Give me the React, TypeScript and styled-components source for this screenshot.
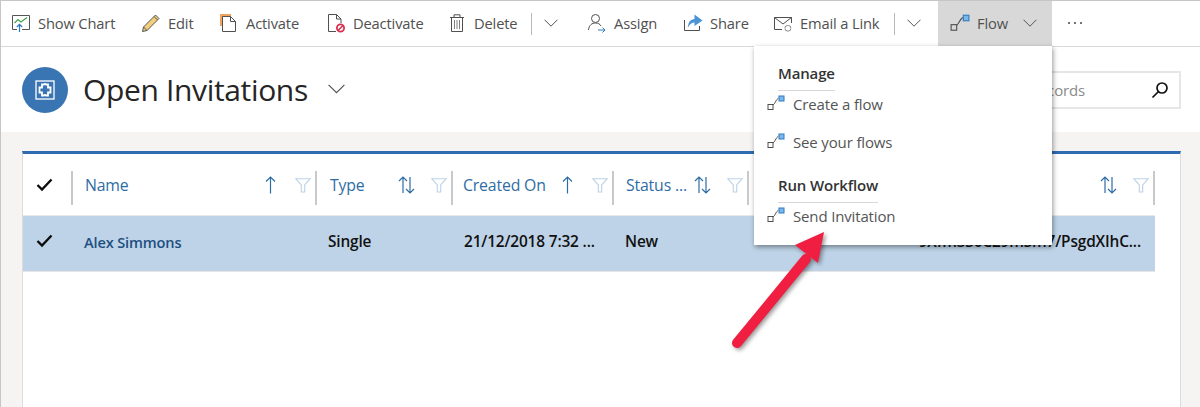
import { ReactNode } from "react";
import styled, { createGlobalStyle } from "styled-components";

const GlobalCSS = createGlobalStyle`
  html, body {
    margin: 0;
    padding: 0;
    background: #ffffff;
  }
  * {
    box-sizing: border-box;
  }
`;

const Page = styled.div`
  position: relative;
  display: flex;
  flex-direction: column;
  width: 1200px;
  height: 407px;
  overflow: hidden;
  background: #f5f4f2;
  border-top: 1px solid #c6c6c6;
  border-left: 1px solid #c6c6c6;
  font-family: "Open Sans", "Noto Sans", sans-serif;
`;

const Toolbar = styled.div`
  display: flex;
  align-items: stretch;
  height: 46px;
  flex: none;
  padding-left: 10px;
  background: #ffffff;
  border-bottom: 1px solid #d8d8d8;
`;

const ToolButton = styled.div<{ $w: number; $active?: boolean }>`
  display: flex;
  align-items: center;
  gap: 7px;
  width: ${({ $w }) => $w}px;
  flex: none;
  padding-bottom: 2px;
  color: #505050;
  font-size: 14.7px;
  letter-spacing: -0.15px;
  white-space: nowrap;
  background: ${({ $active }) => ($active ? "#d8d8d8" : "transparent")};
`;

const ToolIcon = styled.svg`
  width: 20px;
  height: 20px;
  flex: none;
`;

const ToolDivider = styled.div`
  width: 1px;
  height: 22px;
  align-self: center;
  flex: none;
  background: #b8b8b8;
`;

const ChevronSlot = styled.div<{ $w: number }>`
  display: flex;
  align-items: center;
  width: ${({ $w }) => $w}px;
  flex: none;
  padding-left: 12px;
`;

const FlowButton = styled(ToolButton)`
  padding-left: 12px;
  margin-bottom: -1px;
`;

const FlowChevron = styled.span`
  display: flex;
  margin-left: 8px;
`;

const Dots = styled.div`
  display: flex;
  align-items: center;
  gap: 4px;
  padding: 0 0 2px 16px;
`;

const Dot = styled.span`
  width: 2px;
  height: 2px;
  border-radius: 50%;
  background: #444444;
`;

const Header = styled.div`
  display: flex;
  align-items: center;
  justify-content: space-between;
  height: 85px;
  flex: none;
  padding: 0 19px 0 21px;
  background: #ffffff;
`;

const TitleGroup = styled.div`
  display: flex;
  align-items: center;
`;

const EntityBadge = styled.div`
  display: flex;
  align-items: center;
  justify-content: center;
  width: 46px;
  height: 46px;
  border-radius: 50%;
  background: #3a75b3;
`;

const Title = styled.h1`
  margin: 0 20px 0 15px;
  color: #252525;
  font-size: 30px;
  font-weight: 400;
  letter-spacing: -0.35px;
  line-height: 46px;
`;

const SearchBox = styled.div`
  display: flex;
  align-items: center;
  justify-content: space-between;
  width: 240px;
  height: 38px;
  padding: 0 10px 0 16px;
  color: #8b8b8b;
  font-size: 15px;
  letter-spacing: -0.15px;
  background: #ffffff;
  border: 2px solid #e6e6e6;
`;

const Content = styled.div`
  flex: 1;
  padding: 19px 19px 0 21px;
`;

const Card = styled.div`
  height: 100%;
  padding-right: 25px;
  background: #ffffff;
  border-top: 3px solid #2e6bb0;
  border-left: 1px solid #dcdcdc;
  border-right: 1px solid #dcdcdc;
`;

const gridColumns = "50px 244px 136px 161px 135px 1fr";

const HeaderRow = styled.div`
  display: grid;
  grid-template-columns: ${gridColumns};
  height: 62px;
  border-bottom: 1px solid #e8e8e8;
`;

const HeaderCell = styled.div<{ $pad?: number }>`
  display: flex;
  align-items: center;
  justify-content: flex-end;
  height: 34px;
  margin-top: 17px;
  padding: 0 4px 6px ${({ $pad = 12 }) => $pad}px;
  color: #2e6da4;
  font-size: 15.8px;
  letter-spacing: -0.15px;
  border-right: 2px solid #c9c9c9;
`;

const HeaderLabel = styled.span`
  flex: 1;
  white-space: nowrap;
`;

const SortSlot = styled.span`
  display: flex;
  justify-content: center;
  width: 18px;
  flex: none;
`;

const FilterSlot = styled.span`
  display: flex;
  justify-content: center;
  width: 16px;
  margin-left: 16px;
  flex: none;
`;

const CheckCell = styled.div`
  display: flex;
  align-items: center;
  height: 34px;
  margin-top: 17px;
  padding: 0 0 6px 13px;
  border-right: 2px solid #c9c9c9;
`;

const RowCheckCell = styled.div`
  display: flex;
  align-items: center;
  padding: 0 0 5px 13px;
`;

const DataRow = styled.div`
  display: grid;
  grid-template-columns: ${gridColumns};
  align-items: center;
  height: 56px;
  color: #111111;
  font-size: 15.4px;
  font-weight: 600;
  letter-spacing: -0.15px;
  background: #bed3e7;
  border-bottom: 1px solid #e6e6e6;
`;

const DataCell = styled.div<{ $link?: boolean; $end?: boolean }>`
  padding: 0 14px 4px 11px;
  white-space: nowrap;
  color: ${({ $link }) => ($link ? "#1d4f80" : "#111111")};
  font-size: ${({ $link }) => ($link ? "14.6px" : "inherit")};
  text-align: ${({ $end }) => ($end ? "right" : "left")};
`;

const Menu = styled.div`
  position: absolute;
  left: 753px;
  top: 45px;
  width: 298px;
  height: 199px;
  padding: 17px 0 0 13px;
  background: #ffffff;
  box-shadow: 1px 2px 5px rgba(0, 0, 0, 0.42);
`;

const MenuHeading = styled.div`
  display: table;
  margin-left: 11px;
  padding-bottom: 7px;
  color: #333333;
  font-size: 15px;
  font-weight: 600;
  letter-spacing: -0.15px;
  line-height: 20px;
  border-bottom: 1px solid #d8d8d8;
`;

const MenuGroup = styled.div`
  margin-bottom: 8px;
`;

const MenuItem = styled.div<{ $h: number }>`
  display: flex;
  align-items: flex-start;
  gap: 8px;
  height: ${({ $h }) => $h}px;
  padding-top: 3px;
  color: #555555;
  font-size: 15px;
  letter-spacing: -0.15px;
  line-height: 20px;
`;

const MenuIcon = styled.svg`
  width: 18px;
  height: 18px;
  flex: none;
`;

const Arrow = styled.svg`
  position: absolute;
  left: 725px;
  top: 228px;
  width: 100px;
  height: 130px;
  filter: drop-shadow(2px 2px 2px rgba(0, 0, 0, 0.4));
`;

const Chevron = ({ size = 14 }: { size?: number }) => (
  <svg width={size} height={size * 0.6} viewBox="0 0 14 8" fill="none" stroke="#555" strokeWidth="1">
    <path d="M0.5 0.5 L7 7 L13.5 0.5" />
  </svg>
);

const Check = () => (
  <svg width="17" height="14" viewBox="0 0 17 14" fill="none" stroke="#0d0d0d" strokeWidth="2.4">
    <path d="M1.5 7 L6 11.5 L15.5 1.5" />
  </svg>
);

const UpArrow = () => (
  <svg width="11" height="18" viewBox="0 0 11 18" fill="none" stroke="#2e6da4" strokeWidth="1.2">
    <path d="M5.5 17.5 V1 M1 5.5 L5.5 1 L10 5.5" />
  </svg>
);

const UpDownArrows = () => (
  <svg width="17" height="18" viewBox="0 0 17 18" fill="none" stroke="#2e6da4" strokeWidth="1.2">
    <path d="M5 17 V1 M1 5 L5 1 L9 5" />
    <path d="M12 1 V17 M8 13 L12 17 L16 13" />
  </svg>
);

const Funnel = () => (
  <svg width="16" height="15" viewBox="0 0 16 15" fill="none" stroke="#bcd2e6" strokeWidth="1.1">
    <path d="M0.7 0.7 H15.3 L9.7 7 V14 H6.3 V7 Z" />
  </svg>
);

const flowPaths = (
  <>
    <rect x="1" y="10.5" width="5" height="5" fill="none" stroke="#505050" />
    <path d="M6 11 C8 10 8.5 6 11.5 4" fill="none" stroke="#505050" />
    <rect x="12" y="2" width="5" height="5" fill="#7db7e8" stroke="#2f7cc4" />
  </>
);

const FlowIcon = () => <MenuIcon viewBox="0 0 18 18">{flowPaths}</MenuIcon>;

type ToolProps = {
  w: number;
  label: string;
  icon: ReactNode;
};

const Tool = ({ w, label, icon }: ToolProps) => (
  <ToolButton $w={w}>
    <ToolIcon viewBox="0 0 20 20">{icon}</ToolIcon>
    {label}
  </ToolButton>
);

const tools: ToolProps[] = [
  {
    w: 130,
    label: "Show Chart",
    icon: (
      <>
        <path d="M6 16.5 H1.5 V2.5 H18.5 V16.5 H11" fill="none" stroke="#555" />
        <path d="M3.5 10 L7 6.5 L10 9 L16 4.5" fill="none" stroke="#3fa34d" strokeWidth="1.2" />
        <path d="M8.5 19 V11.5 M5.8 14 L8.5 11.3 L11.2 14" fill="none" stroke="#2e78c2" strokeWidth="1.2" />
      </>
    ),
  },
  {
    w: 78,
    label: "Edit",
    icon: (
      <>
        <path d="M2.5 14 L14.5 2 L18 5.5 L6 17.5 L1.5 18.5 Z" fill="#f3cf7d" stroke="#555" />
        <path d="M2.5 14 L6 17.5" fill="none" stroke="#555" />
        <path d="M13 3.5 L16.5 7" fill="none" stroke="#555" />
      </>
    ),
  },
  {
    w: 107,
    label: "Activate",
    icon: (
      <>
        <path d="M1 13 V1 H12 V4 H4 V13 Z" fill="#f0a45c" />
        <path d="M3.5 3.5 H11.5 L16.5 8.5 V18.5 H3.5 Z M11.5 3.5 V8.5 H16.5" fill="#fff" stroke="#505050" />
      </>
    ),
  },
  {
    w: 121,
    label: "Deactivate",
    icon: (
      <>
        <path d="M10 18.5 H2.5 V1.5 H10.5 L15 6 V10 M10.5 1.5 V6 H15" fill="none" stroke="#505050" />
        <circle cx="14.5" cy="15" r="3.6" fill="#fff" stroke="#d9304f" strokeWidth="1.8" />
        <path d="M12 17.5 L17 12.5" stroke="#d9304f" strokeWidth="1.6" />
      </>
    ),
  },
  {
    w: 84,
    label: "Delete",
    icon: (
      <>
        <path d="M3 4.5 H17 M7 4.5 V1.8 H13 V4.5" fill="none" stroke="#505050" />
        <path d="M4.5 4.5 V18.5 H15.5 V4.5" fill="none" stroke="#505050" />
        <path d="M7.5 7 V16 M10 7 V16 M12.5 7 V16" fill="none" stroke="#808080" />
      </>
    ),
  },
];

const tools2: ToolProps[] = [
  {
    w: 96,
    label: "Assign",
    icon: (
      <>
        <circle cx="8.5" cy="5.5" r="4" fill="none" stroke="#505050" />
        <path d="M1.5 17 C2 12 5 10 8.5 10 C11 10 13 11 14 13" fill="none" stroke="#505050" />
        <path d="M11 17 H18 M15.5 14.5 L18 17 L15.5 19.5" fill="none" stroke="#2e78c2" />
      </>
    ),
  },
  {
    w: 90,
    label: "Share",
    icon: (
      <>
        <path d="M1.5 7 V17.5 H16.5 V13" fill="none" stroke="#505050" />
        <path d="M5 14.5 C5 8.5 8 6.5 11.5 6 V1.5 L19.5 7.5 L11.5 13 V9.5 C9 9.5 6.5 11 5 14.5 Z" fill="#4a94d6" />
      </>
    ),
  },
  {
    w: 121,
    label: "Email a Link",
    icon: (
      <>
        <path d="M9 16.5 H1.5 V4.5 H18.5 V10 M1.5 4.5 L10 11 L18.5 4.5" fill="none" stroke="#505050" />
        <path d="M12 15 A2.4 2.4 0 0 1 14.4 12.5 H15.5 A2.4 2.4 0 0 1 17.8 15" fill="none" stroke="#808080" />
        <path d="M12 15.5 A2.4 2.4 0 0 0 14.4 18 H15.5 A2.4 2.4 0 0 0 17.8 15.5" fill="none" stroke="#808080" />
      </>
    ),
  },
];

const columns: { label: string; sort: "up" | "both"; pad: number }[] = [
  { label: "Name", sort: "up", pad: 12 },
  { label: "Type", sort: "both", pad: 13 },
  { label: "Created On", sort: "up", pad: 10 },
  { label: "Status ...", sort: "both", pad: 12 },
];

const App = () => {
  return (
    <>
      <GlobalCSS />
      <Page>
        <Toolbar>
          {tools.map((t) => (
            <Tool key={t.label} {...t} />
          ))}
          <ToolDivider />
          <ChevronSlot $w={55}>
            <Chevron />
          </ChevronSlot>
          {tools2.map((t) => (
            <Tool key={t.label} {...t} />
          ))}
          <ToolDivider />
          <ChevronSlot $w={43}>
            <Chevron />
          </ChevronSlot>
          <FlowButton $w={114} $active>
            <ToolIcon viewBox="0 0 18 18">{flowPaths}</ToolIcon>
            Flow
            <FlowChevron>
              <Chevron />
            </FlowChevron>
          </FlowButton>
          <Dots>
            <Dot />
            <Dot />
            <Dot />
          </Dots>
        </Toolbar>

        <Header>
          <TitleGroup>
            <EntityBadge>
              <svg width="20" height="20" viewBox="0 0 20 20" fill="none" stroke="#fff">
                <rect x="1" y="1" width="18" height="18" strokeWidth="1.3" />
                <path
                  d="M4.5 7.5 H7 V4.5 H9 A1.2 1.2 0 0 1 11 4.5 H13 V7.5 H15.5 V12.5 H13 V15.5 H11 A1.2 1.2 0 0 0 9 15.5 H7 V12.5 H4.5 Z"
                  strokeWidth="1.8"
                />
              </svg>
            </EntityBadge>
            <Title>Open Invitations</Title>
            <Chevron size={17} />
          </TitleGroup>
          <SearchBox>
            Search for records
            <svg width="18" height="18" viewBox="0 0 18 18" fill="none" stroke="#111" strokeWidth="1.7">
              <circle cx="11" cy="7" r="5" />
              <path d="M7.5 10.5 L1.5 16.5" />
            </svg>
          </SearchBox>
        </Header>

        <Content>
          <Card>
            <HeaderRow>
              <CheckCell>
                <Check />
              </CheckCell>
              {columns.map((c) => (
                <HeaderCell key={c.label} $pad={c.pad}>
                  <HeaderLabel>{c.label}</HeaderLabel>
                  <SortSlot>{c.sort === "up" ? <UpArrow /> : <UpDownArrows />}</SortSlot>
                  <FilterSlot>
                    <Funnel />
                  </FilterSlot>
                </HeaderCell>
              ))}
              <HeaderCell>
                <SortSlot>
                  <UpDownArrows />
                </SortSlot>
                <FilterSlot>
                  <Funnel />
                </FilterSlot>
              </HeaderCell>
            </HeaderRow>
            <DataRow>
              <RowCheckCell>
                <Check />
              </RowCheckCell>
              <DataCell $link>Alex Simmons</DataCell>
              <DataCell>Single</DataCell>
              <DataCell>21/12/2018 7:32 ...</DataCell>
              <DataCell>New</DataCell>
              <DataCell $end>9Xfm3S0C29mSm7/PsgdXIhC...</DataCell>
            </DataRow>
          </Card>
        </Content>

        <Menu>
          <MenuGroup>
            <MenuHeading>Manage</MenuHeading>
            <MenuItem $h={38}>
              <FlowIcon />
              Create a flow
            </MenuItem>
            <MenuItem $h={38}>
              <FlowIcon />
              See your flows
            </MenuItem>
          </MenuGroup>
          <MenuGroup>
            <MenuHeading>Run Workflow</MenuHeading>
            <MenuItem $h={30}>
              <FlowIcon />
              Send Invitation
            </MenuItem>
          </MenuGroup>
        </Menu>

        <Arrow viewBox="0 0 100 130">
          <path d="M11 114 L80 30" fill="none" stroke="#f01e41" strokeWidth="10" strokeLinecap="round" />
          <path d="M98 3 L92 34 L69 16 Z" fill="#f01e41" />
        </Arrow>
      </Page>
    </>
  );
};

export default App;
